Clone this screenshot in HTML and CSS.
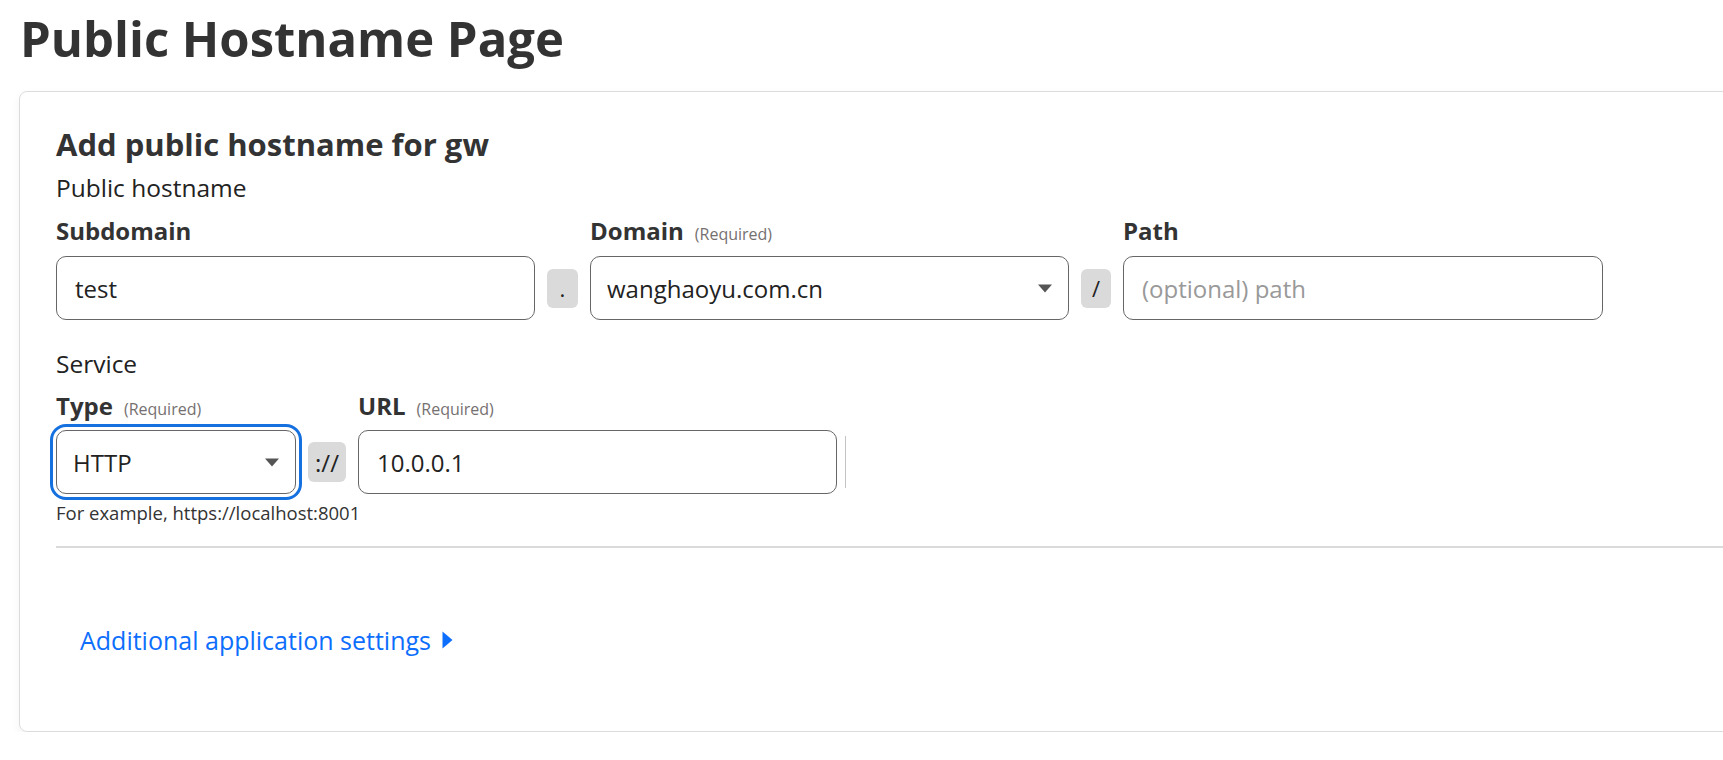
FILE: index.html
```html
<!DOCTYPE html>
<html lang="en">
<head>
<meta charset="utf-8">
<title>Public Hostname Page</title>
<link rel="stylesheet" href="styles.css">
</head>
<body>
<div class="page">
  <h1 class="title">Public Hostname Page</h1>
  <section class="card">
    <h2 class="card-title">Add public hostname for gw</h2>
    <div class="group-title">Public hostname</div>
    <div class="host-grid">
      <label class="field-label c1">Subdomain</label>
      <label class="field-label c3">Domain<span class="req">(Required)</span></label>
      <label class="field-label c5">Path</label>
      <input class="control input" type="text" value="test">
      <span class="addon">.</span>
      <div class="control select"><span class="select-value">wanghaoyu.com.cn</span><svg class="caret" width="14" height="9" viewBox="0 0 14 9"><path d="M0 0.5H14L7 8.5Z" fill="#555"/></svg></div>
      <span class="addon">/</span>
      <input class="control input" type="text" placeholder="(optional) path">
    </div>
    <div class="group-title service">Service</div>
    <div class="svc-grid">
      <label class="field-label">Type<span class="req">(Required)</span></label>
      <span></span>
      <label class="field-label">URL<span class="req">(Required)</span></label>
      <span></span>
      <div class="control select focused"><span class="select-value">HTTP</span><svg class="caret" width="14" height="9" viewBox="0 0 14 9"><path d="M0 0.5H14L7 8.5Z" fill="#555"/></svg></div>
      <span class="addon addon-wide">://</span>
      <input class="control input" type="text" value="10.0.0.1">
      <span class="bar"></span>
    </div>
    <div class="hint">For example, https://localhost:8001</div>
    <hr class="divider">
    <a class="more" href="#">Additional application settings<svg width="11" height="18" viewBox="0 0 11 18"><path d="M0.5 0.5L10.5 9L0.5 17.5Z" fill="#0d6efd"/></svg></a>
  </section>
</div>
</body>
</html>
```
FILE: styles.css
```css
html, body {
  margin: 0;
  padding: 0;
  overflow: hidden;
  background: #fff;
}

body {
  font-family: "Open Sans", "Noto Sans", sans-serif;
  color: #333;
}

.page {
  padding-left: 19px;
}

.title {
  margin: 9px 0 24px 1px;
  font-size: 49px;
  line-height: 58px;
  font-weight: 700;
  color: #333;
}

.card {
  box-sizing: border-box;
  width: 1760px;
  border: 1px solid #dcdcdc;
  border-radius: 8px;
  box-shadow: 0 4px 10px rgba(0, 0, 0, 0.05);
  padding: 32px 0 75px 36px;
}

.card-title {
  margin: 0;
  font-size: 31px;
  line-height: 40px;
  font-weight: 700;
  color: #333;
}

.group-title {
  margin-top: 8px;
  font-size: 24.5px;
  line-height: 32px;
  color: #222;
}

.group-title.service {
  margin-top: 28px;
}

.host-grid {
  margin-top: 11px;
  display: grid;
  grid-template-columns: 479px 31px 479px 30px 480px;
  column-gap: 12px;
  row-gap: 6px;
}

.c1 { grid-column: 1; }
.c3 { grid-column: 3; }
.c5 { grid-column: 5; }

.field-label {
  font-size: 24px;
  line-height: 32px;
  font-weight: 700;
  color: #333;
  white-space: nowrap;
}

.req {
  margin-left: 11px;
  font-size: 16px;
  font-weight: 400;
  color: #757070;
}

.control {
  box-sizing: border-box;
  height: 64px;
  border: 1px solid #666;
  border-radius: 10px;
  background: #fff;
  font-family: "Open Sans", "Noto Sans", sans-serif;
  font-size: 24px;
  color: #222;
}

.input {
  width: 100%;
  padding: 0 18px;
  margin: 0;
  outline: none;
}

.input::placeholder {
  color: #999;
}

.select {
  display: flex;
  align-items: center;
  justify-content: space-between;
  padding: 0 16px;
}

.caret {
  flex: none;
}

.focused {
  outline: 3px solid #1570e0;
  outline-offset: 3px;
}

.addon {
  align-self: center;
  height: 39px;
  border-radius: 6px;
  background: #dadada;
  display: flex;
  align-items: center;
  justify-content: center;
  font-size: 22px;
  color: #222;
}

.addon-wide {
  height: 40px;
  font-size: 24px;
}

.svc-grid {
  margin-top: 10px;
  display: grid;
  grid-template-columns: 240px 38px 479px 1px;
  column-gap: 12px;
  row-gap: 5px;
}

.bar {
  align-self: center;
  width: 1px;
  height: 52px;
  margin-left: -4px;
  background: #c4c4c4;
}

.hint {
  margin-top: 6px;
  font-size: 18.5px;
  line-height: 26px;
  color: #333;
}

.divider {
  margin: 20px 0 0 0;
  border: 0;
  height: 2px;
  background: #dadada;
}

.more {
  margin: 76px 0 0 24px;
  display: flex;
  width: max-content;
  align-items: center;
  gap: 11px;
  font-size: 25px;
  line-height: 32px;
  color: #0d6efd;
  text-decoration: none;
}
```
